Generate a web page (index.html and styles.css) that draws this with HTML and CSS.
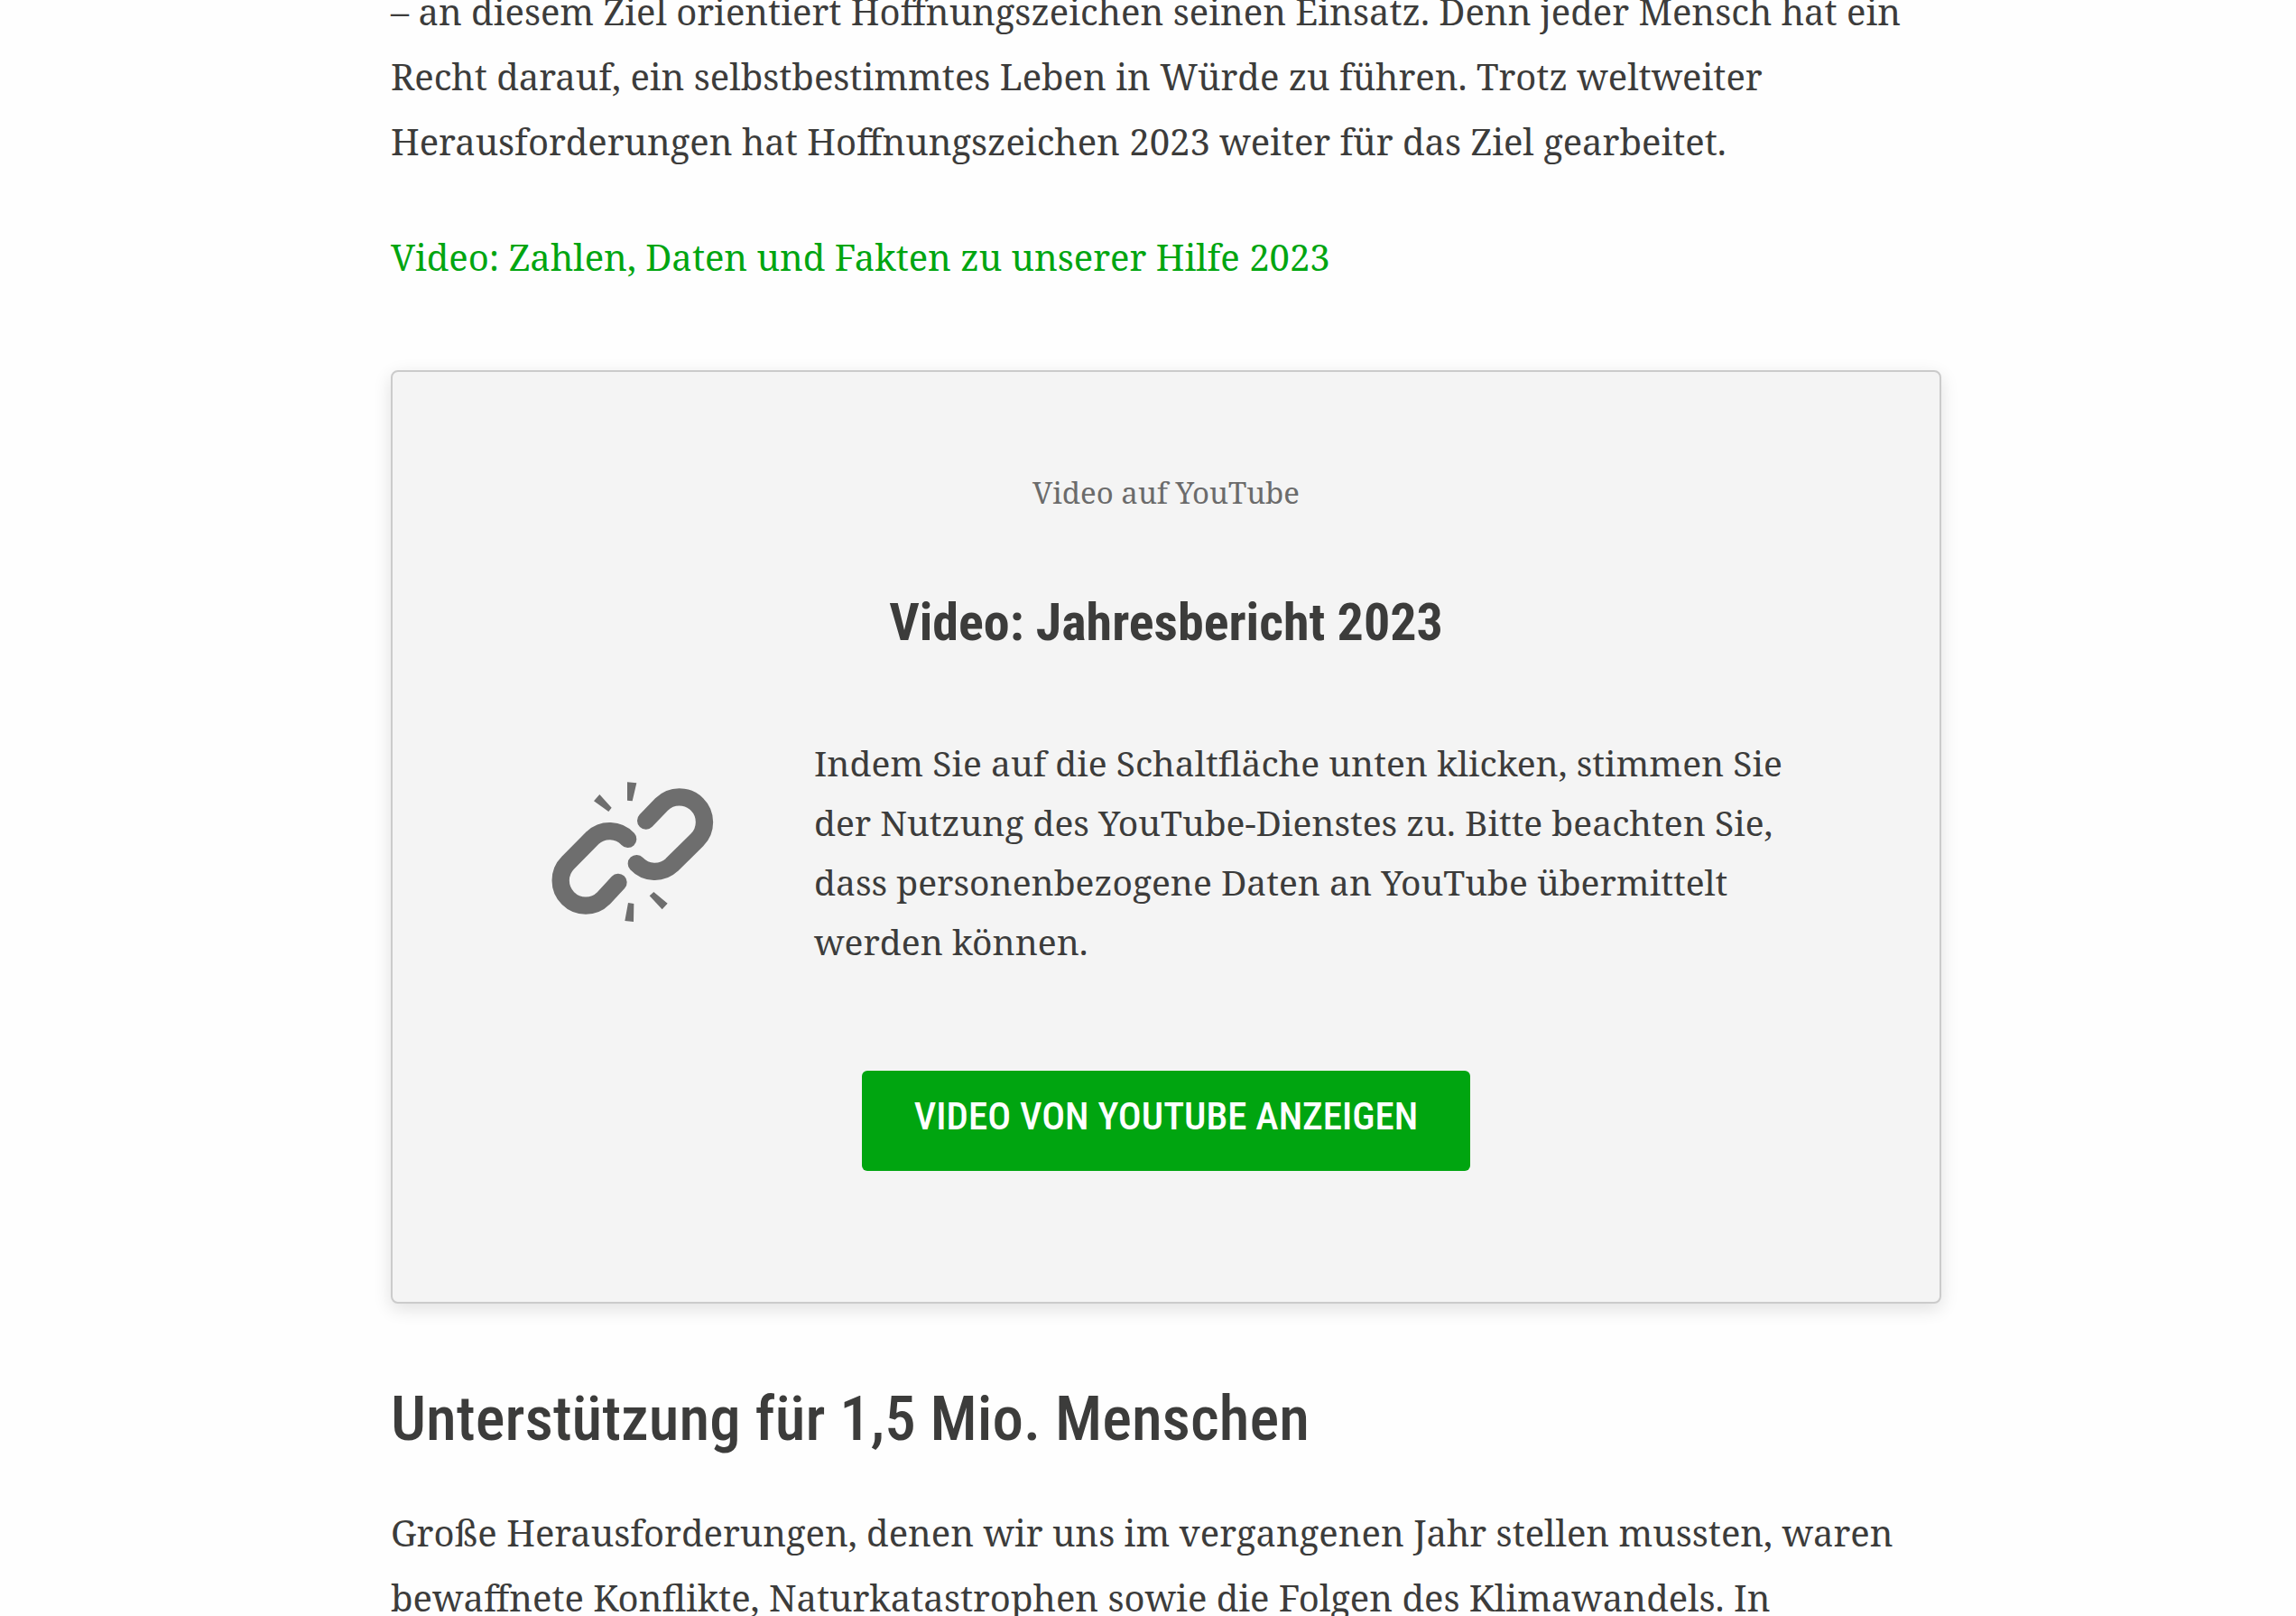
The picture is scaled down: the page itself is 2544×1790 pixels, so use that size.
FILE: index.html
```html
<!DOCTYPE html>
<html lang="de">
<head>
<meta charset="utf-8">
<meta name="viewport" content="width=device-width, initial-scale=1">
<title>Jahresbericht 2023</title>
<link rel="stylesheet" href="styles.css">
</head>
<body>
<main class="article">
  <p class="text">– an diesem Ziel orientiert Hoffnungszeichen seinen Einsatz. Denn jeder Mensch hat ein Recht darauf, ein selbstbestimmtes Leben in Würde zu führen. Trotz weltweiter Herausforderungen hat Hoffnungszeichen 2023 weiter für das Ziel gearbeitet.</p>
  <p class="text"><a class="link" href="#video">Video: Zahlen, Daten und Fakten zu unserer Hilfe 2023</a></p>

  <section class="consent" id="video">
    <p class="consent-source">Video auf YouTube</p>
    <h3 class="consent-title">Video: Jahresbericht 2023</h3>
    <div class="consent-body">
      <svg class="consent-icon" viewBox="94 82 540 468" aria-hidden="true">
        <g fill="none" stroke="currentColor" stroke-width="58" stroke-linecap="round">
          <path d="M316 416 L267 469 A83 83 0 0 1 149 351 L231 268 A83 83 0 0 1 348 272"/>
          <path d="M408 211 L460 157 A83 83 0 0 1 578 275 L494 358 A83 83 0 0 1 377 354"/>
        </g>
        <path fill="currentColor" d="M346 83L377 86L363 146L346 144ZM254 124L294 168L284 181L235 146ZM349 484L368 487L367 547L338 544ZM434 448L480 486L462 506L420 461Z"/>
      </svg>
      <p class="consent-text">Indem Sie auf die Schaltfläche unten klicken, stimmen Sie der Nutzung des YouTube-Dienstes zu. Bitte beachten Sie, dass personenbezogene Daten an YouTube übermittelt werden können.</p>
    </div>
    <button class="button" type="button">Video von YouTube anzeigen</button>
  </section>

  <h2 class="heading">Unterstützung für 1,5 Mio. Menschen</h2>
  <p class="text">Große Herausforderungen, denen wir uns im vergangenen Jahr stellen mussten, waren bewaffnete Konflikte, Naturkatastrophen sowie die Folgen des Klimawandels. In</p>
</main>
</body>
</html>
```

FILE: styles.css
```css
:root {
  --serif: "Noto Serif", "DejaVu Serif Condensed", "DejaVu Serif", serif;
  --narrow: "Roboto Condensed", "Liberation Sans Narrow", "DejaVu Sans Condensed", sans-serif;
  --ink: #3c3c3b;
  --green: #00a510;
}

body {
  margin: 0;
  overflow: hidden;
  background: #fefefe;
  color: var(--ink);
  font-family: var(--serif);
}

.article {
  margin-top: -23px;
  padding: 0 393px 0 433px;
}

.text {
  margin: 0 0 56px;
  font-size: 40px;
  line-height: 72px;
}

.link {
  color: var(--green);
  text-decoration: none;
}

.consent {
  display: flex;
  flex-direction: column;
  align-items: center;
  margin-top: 89px;
  padding: 104px 120px 145px;
  border: 2px solid #cbcbcb;
  border-radius: 8px;
  background: #f4f4f4;
  box-shadow: 0 6px 20px rgba(0, 0, 0, 0.12);
}

.consent-source {
  margin: 0;
  color: #6b6b6b;
  font-size: 33px;
  line-height: 60px;
}

.consent-title {
  margin: 68px 0 78px;
  font-family: var(--narrow);
  font-size: 58px;
  line-height: 90px;
}

.consent-body {
  display: flex;
  align-items: center;
  align-self: stretch;
  gap: 111px;
  padding-left: 56px;
}

.consent-icon {
  flex: none;
  width: 180px;
  color: #6e6e6e;
}

.consent-text {
  flex: 1;
  margin: 0;
  font-size: 39px;
  line-height: 66px;
}

.button {
  margin-top: 110px;
  padding: 20px 58px 30px;
  border: 0;
  border-radius: 6px;
  background: var(--green);
  color: #fff;
  font-family: var(--narrow);
  font-size: 43px;
  font-weight: 500;
  line-height: 61px;
  text-transform: uppercase;
}

.heading {
  margin: 80px 0 42px;
  font-family: var(--narrow);
  font-size: 69px;
  font-weight: 500;
  line-height: 96px;
}
```
